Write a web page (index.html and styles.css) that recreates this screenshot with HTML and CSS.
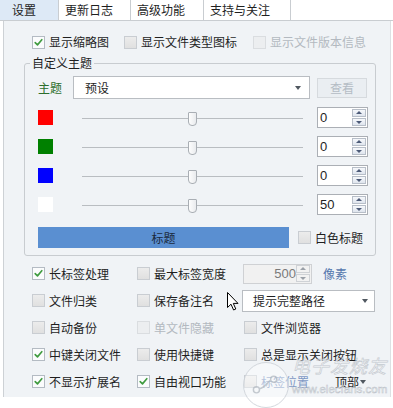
FILE: index.html
```html
<!DOCTYPE html>
<html lang="zh-CN">
<head>
<meta charset="utf-8">
<link rel="stylesheet" href="styles.css">
</head>
<body>
<div class="window">
  <div class="tabs">
    <div class="tab active">设置</div>
    <div class="tab t2">更新日志</div>
    <div class="tab t3">高级功能</div>
    <div class="tab t4">支持与关注</div>
  </div>
  <div class="panel">
    <div class="top-row">
      <span class="cb"><span class="box on"><svg viewBox="0 0 13 13"><path d="M2.6 6.6 L5.3 9.3 L10.4 3.2"/></svg></span>显示缩略图</span>
      <span class="cb"><span class="box"></span>显示文件类型图标</span>
      <span class="cb dis"><span class="box"></span>显示文件版本信息</span>
    </div>
    <fieldset class="group">
      <legend>自定义主题</legend>
      <div class="theme-row">
        <span class="theme-label">主题</span>
        <div class="combo theme-combo"><span>预设</span><i class="arrow"></i></div>
        <div class="btn dis-btn">查看</div>
      </div>
      <div class="color-row">
        <span class="swatch red"></span>
        <div class="slider"><span class="thumb"></span></div>
        <div class="spin"><span class="val">0</span><span class="spin-btns"><b class="up"></b><b class="down"></b></span></div>
      </div>
      <div class="color-row">
        <span class="swatch green"></span>
        <div class="slider"><span class="thumb"></span></div>
        <div class="spin"><span class="val">0</span><span class="spin-btns"><b class="up"></b><b class="down"></b></span></div>
      </div>
      <div class="color-row">
        <span class="swatch blue"></span>
        <div class="slider"><span class="thumb"></span></div>
        <div class="spin"><span class="val">0</span><span class="spin-btns"><b class="up"></b><b class="down"></b></span></div>
      </div>
      <div class="color-row">
        <span class="swatch white"></span>
        <div class="slider"><span class="thumb"></span></div>
        <div class="spin"><span class="val">50</span><span class="spin-btns"><b class="up"></b><b class="down"></b></span></div>
      </div>
      <div class="title-row">
        <div class="title-bar">标题</div>
        <span class="cb"><span class="box"></span>白色标题</span>
      </div>
    </fieldset>
    <div class="opts">
      <span class="cb"><span class="box on"><svg viewBox="0 0 13 13"><path d="M2.6 6.6 L5.3 9.3 L10.4 3.2"/></svg></span>长标签处理</span>
      <span class="cb"><span class="box"></span>最大标签宽度</span>
      <span class="cell">
        <span class="spin spin-dis"><span class="val">500</span><span class="spin-btns"><b class="up"></b><b class="down"></b></span></span>
        <span class="unit">像素</span>
      </span>

      <span class="cb"><span class="box"></span>文件归类</span>
      <span class="cb"><span class="box"></span>保存备注名</span>
      <span class="cell">
        <span class="combo path-combo"><span>提示完整路径</span><i class="arrow"></i></span>
      </span>

      <span class="cb"><span class="box"></span>自动备份</span>
      <span class="cb dis"><span class="box"></span>单文件隐藏</span>
      <span class="cb"><span class="box"></span>文件浏览器</span>

      <span class="cb"><span class="box on"><svg viewBox="0 0 13 13"><path d="M2.6 6.6 L5.3 9.3 L10.4 3.2"/></svg></span>中键关闭文件</span>
      <span class="cb"><span class="box"></span>使用快捷键</span>
      <span class="cb"><span class="box"></span>总是显示关闭按钮</span>

      <span class="cb"><span class="box on"><svg viewBox="0 0 13 13"><path d="M2.6 6.6 L5.3 9.3 L10.4 3.2"/></svg></span>不显示扩展名</span>
      <span class="cb"><span class="box on"><svg viewBox="0 0 13 13"><path d="M2.6 6.6 L5.3 9.3 L10.4 3.2"/></svg></span>自由视口功能</span>
      <span class="cb"><span class="box"></span><span class="pos-label">标签位置</span><span class="pos-val">顶部<i class="arrow"></i></span></span>
    </div>
  </div>

  <svg class="cursor" viewBox="0 0 12 19" width="12" height="19">
    <path d="M0.5 0.5 L0.5 15.5 L4 12.2 L6.6 18 L8.8 17 L6.3 11.4 L11 11.4 Z" fill="#fff" stroke="#000" stroke-width="1" stroke-linejoin="round"/>
  </svg>

  <div class="watermark">
    <div class="wm-circle">
      <svg viewBox="0 0 46 46" width="44" height="44">
        <circle cx="13" cy="28" r="3.2" fill="none" stroke="#bcc2c9" stroke-width="1.5"/>
        <circle cx="31" cy="17" r="3.2" fill="none" stroke="#bcc2c9" stroke-width="1.5"/>
        <path d="M16 27 C22 26 24 20 28 18" fill="none" stroke="#bcc2c9" stroke-width="1.5"/>
      </svg>
    </div>
    <div class="wm-text">
      <span class="wm-cn">电子发烧友</span>
      <span class="wm-url">www.elecfans.com</span>
    </div>
  </div>
</div>
</body>
</html>
```
FILE: styles.css
```css
* { box-sizing: border-box; }
html, body { margin: 0; padding: 0; background: #fff; }
body {
  font-family: "Noto Sans CJK SC", "Microsoft YaHei", "Noto Sans", sans-serif;
  font-size: 12px;
  color: #1f1f1f;
}
.window {
  position: relative;
  width: 393px;
  height: 408px;
  overflow: hidden;
  background: #fff;
}

/* tabs */
.tabs {
  display: flex;
  height: 21px;
  border-bottom: 1px solid #c9cdd1;
}
.tab {
  height: 20px;
  line-height: 20px;
  padding-left: 6px;
  border-right: 1px solid #c9cdd1;
  white-space: nowrap;
}
.tab.active { width: 59px; padding-left: 12px; background: #dde9f6; }
.tab.t2 { width: 72px; }
.tab.t3 { width: 73px; }
.tab.t4 { width: 87px; }

/* panel */
.panel {
  margin-left: 3px;
  width: 388px;
  height: 376px;
  background: #f0f3f6;
  border-left: 1px solid #cdd1d5;
  border-right: 1px solid #dde0e3;
  padding: 12px 0 0 28px;
}

/* checkbox */
.cb {
  display: flex;
  align-items: center;
  gap: 4px;
  white-space: nowrap;
  line-height: 16px;
}
.box {
  flex: none;
  width: 13px;
  height: 13px;
  border: 1px solid #c9cdd2;
  background: linear-gradient(#ececec, #e0e0e0);
}
.box.on {
  background: #fbfcfd;
  border-color: #b4bbc3;
}
.box svg { display: block; width: 11px; height: 11px; }
.box svg path {
  fill: none;
  stroke: #3f9b3f;
  stroke-width: 1.9;
  stroke-linecap: round;
  stroke-linejoin: round;
}
.cb.dis { color: #b3b9c0; }
.cb.dis .box { background: #eceef0; border-color: #dadde0; }

.top-row {
  display: grid;
  grid-template-columns: 92px 129px auto;
  height: 18px;
  align-items: center;
}

/* group */
.group {
  margin: 4px 0 0 -8px;
  width: 352px;
  padding: 5px 7px 7px 13px;
  border: 1px solid #c8ccd0;
  border-radius: 3px;
  min-width: 0;
}
.group legend {
  padding: 0 2px;
  margin-left: -8px;
  line-height: 16px;
  font-size: 12px;
}
.theme-row {
  display: flex;
  align-items: center;
  height: 23px;
}
.theme-label { width: 35px; color: #2c6e2c; }
.combo {
  display: flex;
  align-items: center;
  justify-content: space-between;
  background: #fff;
  border: 1px solid #b9bdc2;
}
.theme-combo {
  width: 237px;
  height: 23px;
  padding: 0 8px 0 11px;
}
.arrow {
  display: inline-block;
  width: 0;
  height: 0;
  border-left: 3.5px solid transparent;
  border-right: 3.5px solid transparent;
  border-top: 4px solid #505860;
}
.btn {
  margin-left: 7px;
  width: 50px;
  height: 20px;
  line-height: 18px;
  text-align: center;
}
.dis-btn {
  background: #eaeef2;
  border: 1px solid #d6dade;
  color: #b4bcc4;
}

.color-row {
  display: flex;
  align-items: center;
  height: 21px;
  margin-top: 8px;
}
.swatch { width: 15px; height: 15px; margin-right: 29px; flex: none; }
.swatch.red { background: #ff0000; }
.swatch.green { background: #008000; }
.swatch.blue { background: #0000ff; }
.swatch.white { background: #ffffff; }
.slider {
  position: relative;
  width: 221px;
  height: 21px;
}
.slider::before {
  content: "";
  position: absolute;
  left: 0;
  right: 0;
  top: 11px;
  height: 1px;
  background: #b9bdc1;
}
.thumb {
  position: absolute;
  left: 106px;
  top: 5px;
  width: 9px;
  height: 14px;
  background: linear-gradient(90deg, #fdfdfd, #e9ebee);
  border: 1px solid #a9aeb4;
  border-radius: 1px 1px 4px 4px;
}
.spin {
  display: flex;
  align-items: center;
  justify-content: space-between;
  margin-left: 14px;
  width: 51px;
  height: 21px;
  background: #fff;
  border: 1px solid #abafb5;
  padding: 0 1px 0 2px;
  font-family: "Liberation Sans", Arial, sans-serif;
  font-size: 13px;
}
.spin-btns {
  display: flex;
  flex-direction: column;
  gap: 1px;
  width: 14px;
}
.spin-btns b {
  position: relative;
  display: block;
  height: 8px;
  background: linear-gradient(#f6f8fb, #dfe5ee);
  border: 1px solid #b7bec8;
}
.spin-btns b::after {
  content: "";
  position: absolute;
  left: 3px;
  width: 0;
  height: 0;
  border-left: 3px solid transparent;
  border-right: 3px solid transparent;
}
.spin-btns .up::after { top: 1px; border-bottom: 3px solid #4d5b78; }
.spin-btns .down::after { top: 2px; border-top: 3px solid #4d5b78; }

.title-row {
  display: flex;
  align-items: center;
  height: 21px;
  margin-top: 12px;
  gap: 9px;
}
.title-bar {
  width: 251px;
  height: 21px;
  line-height: 21px;
  text-align: center;
  background: #5a8fd1;
  color: #1b2a3d;
}

/* options */
.opts {
  display: grid;
  grid-template-columns: 105px 107px 1fr;
  grid-auto-rows: 27px;
  align-items: center;
  margin-top: 4px;
}
.cell { display: flex; align-items: center; }
.spin-dis {
  margin-left: -1px;
  width: 69px;
  height: 20px;
  background: #f1f1f1;
  border-color: #cfd1d4;
  color: #7a7a7a;
  justify-content: flex-end;
  gap: 0;
}
.spin-dis .spin-btns b { background: #f2f2f2; border-color: #cfd2d6; }
.spin-dis .spin-btns .up::after { border-bottom-color: #9aa0a8; }
.spin-dis .spin-btns .down::after { border-top-color: #9aa0a8; }
.unit { margin-left: 11px; color: #5577ad; }
.path-combo {
  margin-left: -2px;
  width: 133px;
  height: 22px;
  padding: 0 6px 0 10px;
}
.pos-label { color: #7e98c4; }
.pos-val {
  display: flex;
  align-items: center;
  gap: 1px;
  margin-left: 22px;
}

/* overlays */
.cursor {
  position: absolute;
  left: 227px;
  top: 292px;
}
.watermark {
  position: absolute;
  left: 243px;
  top: 354px;
  display: flex;
  align-items: flex-start;
  opacity: 0.85;
  pointer-events: none;
}
.wm-circle {
  width: 46px;
  height: 46px;
  margin-top: 8px;
  border-radius: 50%;
  border: 1.5px solid #cdd2d8;
  background: rgba(255, 255, 255, 0.5);
  display: flex;
  align-items: center;
  justify-content: center;
}
.wm-text {
  display: flex;
  flex-direction: column;
  margin-left: 3px;
}
.wm-cn {
  font-family: "Liberation Serif", "Noto Sans CJK SC", serif;
  font-style: italic;
  font-size: 18px;
  line-height: 26px;
  letter-spacing: 1px;
  color: rgba(255, 255, 255, 0.55);
  -webkit-text-stroke: 0.6px #bcc2c9;
}
.wm-url {
  margin-top: 3px;
  font-family: "Liberation Sans", Arial, sans-serif;
  font-size: 11.5px;
  font-weight: normal;
  line-height: 13px;
  color: rgba(255, 255, 255, 0.6);
  -webkit-text-stroke: 0.5px #b4bac2;
}
```
